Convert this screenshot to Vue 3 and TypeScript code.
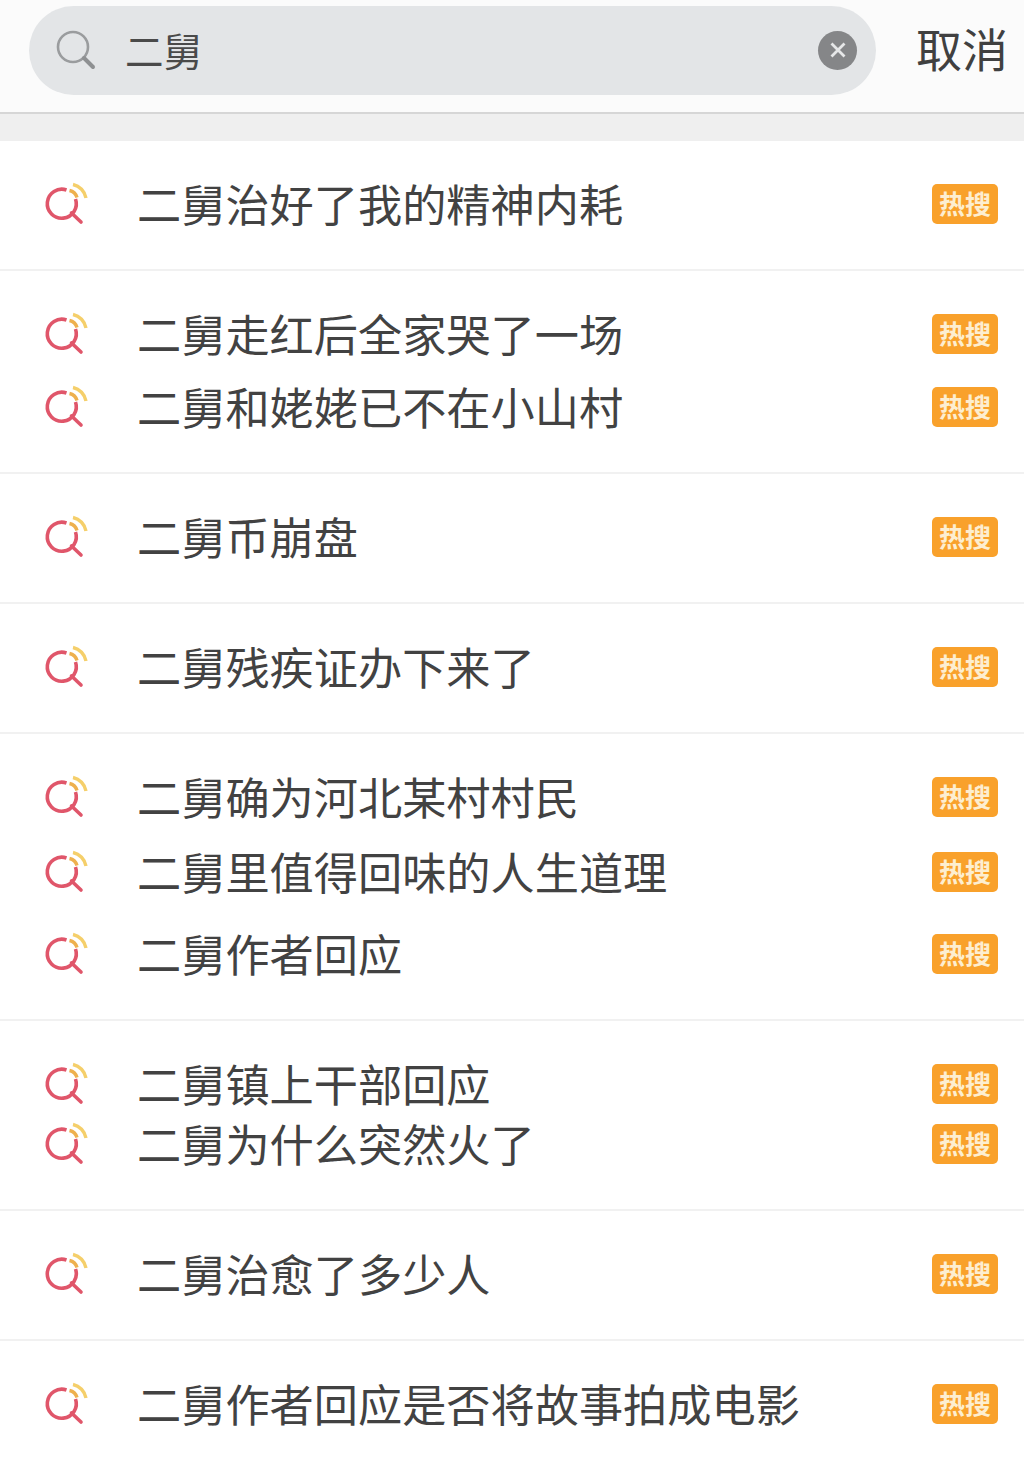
<script setup lang="ts">
interface Row { text: string; gap: number }
const groups: Row[][] = [
  [{ text: '二舅治好了我的精神内耗', gap: 0 }],
  [{ text: '二舅走红后全家哭了一场', gap: 0 }, { text: '二舅和姥姥已不在小山村', gap: 25 }],
  [{ text: '二舅币崩盘', gap: 0 }],
  [{ text: '二舅残疾证办下来了', gap: 0 }],
  [{ text: '二舅确为河北某村村民', gap: 0 }, { text: '二舅里值得回味的人生道理', gap: 27 }, { text: '二舅作者回应', gap: 34 }],
  [{ text: '二舅镇上干部回应', gap: 0 }, { text: '二舅为什么突然火了', gap: 12 }],
  [{ text: '二舅治愈了多少人', gap: 0 }],
  [{ text: '二舅作者回应是否将故事拍成电影', gap: 0 }],
]
</script>

<template>
  <div class="page">
    <header class="header">
      <div class="search">
        <svg class="search-icon" width="42" height="42" viewBox="0 0 42 42" fill="none">
          <circle cx="17" cy="17" r="15" stroke="#9a9c9e" stroke-width="2.6" />
          <path d="M28 28 L37 37" stroke="#8e9092" stroke-width="4" stroke-linecap="round" />
        </svg>
        <span class="query">二舅</span>
        <span class="clear">
          <svg width="20" height="20" viewBox="0 0 20 20" fill="none">
            <path d="M3.5 3.5 L16.5 16.5 M16.5 3.5 L3.5 16.5" stroke="#e6e7e8" stroke-width="2.8" />
          </svg>
        </span>
      </div>
      <span class="cancel">取消</span>
    </header>
    <div class="band"></div>
    <section v-for="(group, g) in groups" :key="g" class="group">
      <div v-for="row in group" :key="row.text" class="row" :style="{ marginTop: row.gap + 'px' }">
        <svg class="hot-icon" width="50" height="50" viewBox="0 0 50 50" fill="none">
          <path d="M24.5 10 A14.5 14.5 0 1 0 33.5 19" stroke="#e0566a" stroke-width="3.6" />
          <path d="M29.5 33 L39 42" stroke="#e0566a" stroke-width="3.6" stroke-linecap="round" />
          <path d="M31 4.5 A17 17 0 0 1 44 18" stroke="#f5cf6a" stroke-width="3.4" />
          <path d="M27.5 10.5 A10 10 0 0 1 35 17.5" stroke="#eeb04e" stroke-width="3.4" />
        </svg>
        <span class="label">{{ row.text }}</span>
        <span class="badge">热搜</span>
      </div>
    </section>
  </div>
</template>

<style scoped>
.page {
  width: 1024px;
  height: 1459px;
  overflow: hidden;
  background: #ffffff;
  font-family: "Noto Sans CJK SC", "Noto Sans", sans-serif;
  color: #3c3c3c;
}
.header {
  height: 112px;
  box-sizing: border-box;
  padding: 6px 16px 0 29px;
  display: flex;
  align-items: flex-start;
  justify-content: space-between;
  background: #fbfbfb;
}
.search {
  width: 847px;
  height: 89px;
  box-sizing: border-box;
  border-radius: 44.5px;
  background: #e3e5e7;
  display: flex;
  align-items: center;
  padding: 0 19px 0 27px;
}
.search-icon {
  flex: none;
}
.query {
  margin-left: 27px;
  padding-bottom: 4px;
  font-size: 38.5px;
  line-height: 48px;
  color: #4a4a4a;
  flex: 1;
}
.clear {
  width: 39px;
  height: 39px;
  margin-bottom: 1px;
  border-radius: 50%;
  background: #858688;
  display: flex;
  align-items: center;
  justify-content: center;
}
.cancel {
  font-size: 46px;
  line-height: 82px;
  color: #404040;
}
.band {
  height: 27px;
  background: #efefef;
  border-top: 2px solid #d6d6d6;
}
.group {
  padding: 39px 0 41px;
  border-bottom: 2px solid #f1f1f1;
}
.row {
  height: 48px;
  display: flex;
  align-items: center;
  padding: 0 26px 0 42px;
}
.hot-icon {
  flex: none;
  margin-top: 2px;
}
.label {
  flex: 1;
  margin-left: 45px;
  padding-bottom: 2px;
  font-size: 44.2px;
  line-height: 46px;
  color: #424242;
  white-space: nowrap;
}
.badge {
  flex: none;
  width: 66px;
  height: 40px;
  border-radius: 5px;
  background: #f9a12b;
  color: #fdeed0;
  font-size: 26px;
  line-height: 38px;
  text-align: center;
  font-weight: 700;
}
</style>
